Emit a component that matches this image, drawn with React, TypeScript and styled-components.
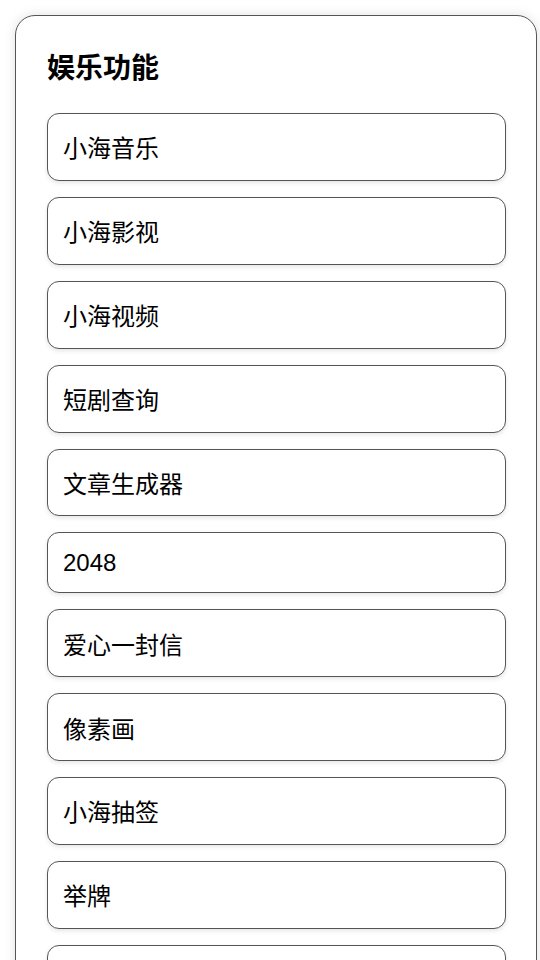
import React from "react";
import styled, { createGlobalStyle } from "styled-components";

const GlobalStyle = createGlobalStyle`
  html, body {
    margin: 0;
    padding: 0;
    background: #ffffff;
  }
  body {
    font-family: "Liberation Sans", "Noto Sans CJK SC", sans-serif;
    color: #000;
  }
  * { box-sizing: border-box; }
`;

const Page = styled.div`
  padding: 15px 3px 40px 15px;
`;

const Card = styled.section`
  border: 1px solid #555;
  border-radius: 20px;
  background: #fff;
  box-shadow: 0 0 12px rgba(0, 0, 0, 0.12);
  padding: 30px 30px 30px 31px;
`;

const Title = styled.h2`
  margin: 0 0 27px 0;
  font-size: 28px;
  font-weight: 700;
  font-family: "Liberation Sans", "Noto Sans CJK SC", sans-serif;
`;

const List = styled.div`
  display: flex;
  flex-direction: column;
  gap: 16px;
`;

const Item = styled.button`
  display: block;
  width: 100%;
  text-align: left;
  background: #fff;
  border: 1px solid #555;
  border-radius: 12px;
  padding: 15.45px 15px;
  font-size: 24px;
  font-family: "Liberation Sans", "Noto Sans CJK SC", sans-serif;
  color: #000;
  box-shadow: 0 2px 4px rgba(0, 0, 0, 0.1);
  cursor: pointer;
`;

const items = [
  "小海音乐",
  "小海影视",
  "小海视频",
  "短剧查询",
  "文章生成器",
  "2048",
  "爱心一封信",
  "像素画",
  "小海抽签",
  "举牌",
  "小海翻译",
  "小海壁纸",
];

export default function App() {
  return (
    <>
      <GlobalStyle />
      <Page>
        <Card>
          <Title>娱乐功能</Title>
          <List>
            {items.map((t) => (
              <Item key={t}>{t}</Item>
            ))}
          </List>
        </Card>
      </Page>
    </>
  );
}
